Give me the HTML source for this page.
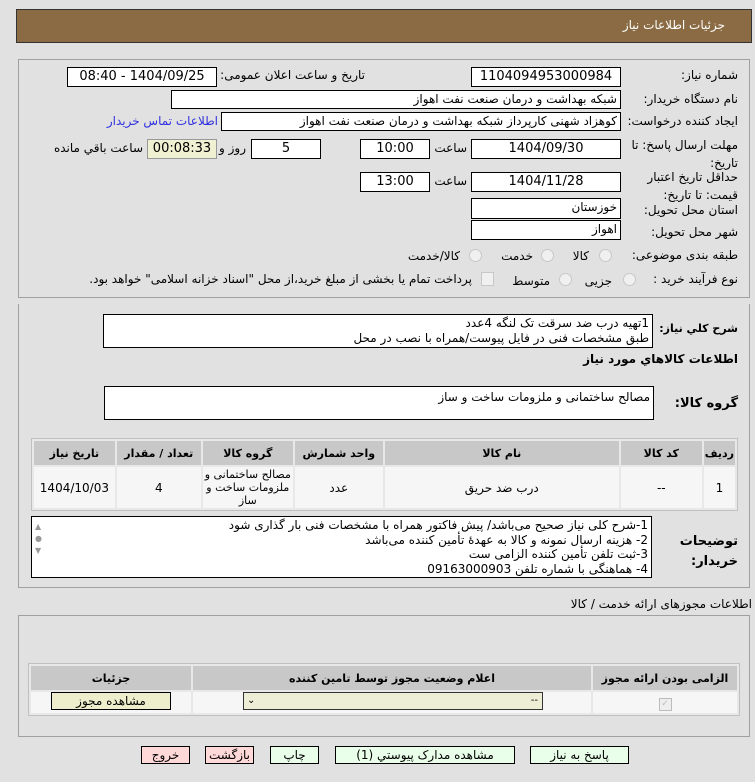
<!DOCTYPE html>
<html><head><meta charset="utf-8"><style>
body{margin:0;width:755px;height:782px;background:#e1e1e1;font-family:"DejaVu Sans","Liberation Sans",sans-serif;font-size:12px;color:#000;position:relative;overflow:hidden}
.a{position:absolute}
.box{position:absolute;background:#fff;border:1px solid #000;box-sizing:border-box;direction:rtl;padding:0 3px;line-height:17px;white-space:nowrap;overflow:hidden}
.c{text-align:center}
.l{position:absolute;direction:rtl;white-space:nowrap;text-align:right;font-size:12px}
.panel{position:absolute;border:1px solid #a0a0a0;box-sizing:border-box}
table{border-collapse:separate;border-spacing:2px;position:absolute;background:#e8e8e8;border:1px solid #c0c0c0}
th{background:#c8c8c8;font-weight:bold;font-size:11px;height:22px}
td{background:#f6f6f6;text-align:center}
.btn{position:absolute;border:1px solid #000;box-sizing:border-box;text-align:center;line-height:16px;background:#eaffea}
.pk{background:#ffd8d8}
.rad{position:absolute;width:11px;height:11px;border-radius:50%;border:1px solid #c8c8c8;background:#f0f0f0}
</style></head><body>
<div class="a" style="left:16px;top:9px;width:736px;height:34px;background:#8b6b43;border:1px solid #333;box-sizing:border-box"></div>
<div class="l" style="right:30px;top:18px;color:#fff;font-size:12px">جزئيات اطلاعات نياز</div>

<div class="panel" style="left:18px;top:59px;width:732px;height:239px"></div>
<div class="panel" style="left:18px;top:304px;width:732px;height:284px;border-top:none"></div>

<div class="l" style="right:17px;top:68px">شماره نیاز:</div>
<div class="box c" style="left:471px;top:67px;width:150px;height:20px;font-size:13px">1104094953000984</div>
<div class="l" style="right:390px;top:68px">تاریخ و ساعت اعلان عمومی:</div>
<div class="box c" style="left:67px;top:67px;width:150px;height:20px;font-size:13px">1404/09/25 - 08:40</div>

<div class="l" style="right:17px;top:92px">نام دستگاه خریدار:</div>
<div class="box" style="left:171px;top:90px;width:450px;height:19px">شبکه بهداشت و درمان صنعت نفت اهواز</div>

<div class="l" style="right:17px;top:114px">ایجاد کننده درخواست:</div>
<div class="box" style="left:221px;top:112px;width:400px;height:19px">کوهزاد شهنی کارپرداز شبکه بهداشت و درمان صنعت نفت اهواز</div>
<div class="l" style="right:537px;top:114px;color:#3030e0">اطلاعات تماس خریدار</div>

<div class="l" style="right:17px;top:136px;line-height:18px">مهلت ارسال پاسخ: تا<br>تاریخ:</div>
<div class="box c" style="left:471px;top:139px;width:150px;height:20px;font-size:13px">1404/09/30</div>
<div class="l" style="right:288px;top:141px">ساعت</div>
<div class="box c" style="left:360px;top:139px;width:70px;height:20px;font-size:13px">10:00</div>
<div class="box c" style="left:251px;top:139px;width:70px;height:20px;font-size:13px">5</div>
<div class="l" style="right:509px;top:141px">روز و</div>
<div class="box c" style="left:147px;top:139px;width:70px;height:20px;font-size:13px;background:#f0f0d2;border-color:#999">00:08:33</div>
<div class="l" style="right:612px;top:141px">ساعت باقي مانده</div>

<div class="l" style="right:17px;top:168px;line-height:18px">حداقل تاریخ اعتبار<br>قیمت: تا تاریخ:</div>
<div class="box c" style="left:471px;top:172px;width:150px;height:20px;font-size:13px">1404/11/28</div>
<div class="l" style="right:288px;top:174px">ساعت</div>
<div class="box c" style="left:360px;top:172px;width:70px;height:20px;font-size:13px">13:00</div>

<div class="l" style="right:17px;top:203px">استان محل تحویل:</div>
<div class="box" style="left:471px;top:198px;width:150px;height:21px">خوزستان</div>
<div class="l" style="right:17px;top:225px">شهر محل تحویل:</div>
<div class="box" style="left:471px;top:220px;width:150px;height:20px">اهواز</div>

<div class="l" style="right:17px;top:248px">طبقه بندی موضوعی:</div>
<div class="rad" style="left:599px;top:249px"></div><div class="l" style="right:166px;top:249px">کالا</div>
<div class="rad" style="left:541px;top:249px"></div><div class="l" style="right:222px;top:249px">خدمت</div>
<div class="rad" style="left:469px;top:249px"></div><div class="l" style="right:295px;top:249px">کالا/خدمت</div>

<div class="l" style="right:17px;top:272px">نوع فرآیند خرید :</div>
<div class="rad" style="left:623px;top:273px"></div><div class="l" style="right:143px;top:274px">جزیی</div>
<div class="rad" style="left:559px;top:273px"></div><div class="l" style="right:205px;top:274px">متوسط</div>
<div class="a" style="left:481px;top:272px;width:11px;height:12px;border:1px solid #c8c8c8;background:#f0f0f0"></div>
<div class="l" style="right:283px;top:272px">پرداخت تمام یا بخشی از مبلغ خرید،از محل "اسناد خزانه اسلامی" خواهد بود.</div>

<div class="l" style="right:17px;top:322px;font-weight:bold;font-size:11px">شرح کلي نياز:</div>
<div class="box" style="left:103px;top:314px;width:550px;height:34px;line-height:15px;padding-top:1px">1تهیه درب ضد سرقت تک لنگه 4عدد<br>طبق مشخصات فنی در فایل پیوست/همراه با نصب در محل</div>
<div class="l" style="right:17px;top:352px;font-weight:bold">اطلاعات کالاهاي مورد نياز</div>
<div class="l" style="right:17px;top:396px;font-weight:bold;font-size:13px">گروه کالا:</div>
<div class="box" style="left:104px;top:386px;width:550px;height:34px;padding-top:2px">مصالح ساختمانی و ملزومات ساخت و ساز</div>

<table style="left:31px;top:438px;width:707px;direction:rtl">
<tr><th style="width:25px">ردیف</th><th style="width:79px">کد کالا</th><th style="width:232px">نام کالا</th><th style="width:86px">واحد شمارش</th><th style="width:88px">گروه کالا</th><th style="width:82px">تعداد / مقدار</th><th>تاریخ نیاز</th></tr>
<tr style="height:41px"><td>1</td><td>--</td><td>درب ضد حریق</td><td>عدد</td><td style="font-size:11px;line-height:13px">مصالح ساختمانی و ملزومات ساخت و ساز</td><td>4</td><td>1404/10/03</td></tr>
</table>

<div class="l" style="right:17px;top:532px;font-weight:bold;line-height:20px;font-size:13px">توضیحات<br>خریدار:</div>
<div class="box" style="left:31px;top:516px;width:621px;height:62px;line-height:14.5px;padding-top:1px">1-شرح کلی نیاز صحیح می‌باشد/ پیش فاکتور همراه با مشخصات فنی بار گذاری شود<br>2- هزینه ارسال نمونه و کالا به عهدۀ تأمین کننده می‌باشد<br>3-ثبت تلفن تأمین کننده الزامی ست<br>4- هماهنگی با شماره تلفن 09163000903</div>
<div class="a" style="left:35px;top:521px;color:#999;font-size:8px;line-height:12px">▲<br>●<br>▼</div>

<div class="l" style="right:3px;top:597px">اطلاعات مجوزهای ارائه خدمت / کالا</div>
<div class="panel" style="left:18px;top:615px;width:732px;height:122px"></div>
<table style="left:28px;top:663px;width:712px;direction:rtl">
<tr><th style="width:142px">الزامی بودن ارائه مجوز</th><th style="width:396px">اعلام وضعیت مجوز توسط تامین کننده</th><th>جزئیات</th></tr>
<tr style="height:21px"><td><span style="display:inline-block;width:11px;height:11px;border:1px solid #bbb;background:#eee;color:#bbb;font-size:9px;line-height:11px">✓</span></td><td></td><td></td></tr>
</table>
<div class="a" style="left:243px;top:692px;width:300px;height:18px;background:#eeeed6;border:1px solid #333;box-sizing:border-box;font-size:10px;line-height:16px"><span style="position:absolute;left:3px">⌄</span><span style="position:absolute;right:4px">--</span></div>
<div class="btn" style="left:51px;top:692px;width:120px;height:18px;background:#eeeecc">مشاهده مجوز</div>

<div class="btn" style="left:530px;top:746px;width:99px;height:18px">پاسخ به نیاز</div>
<div class="btn" style="left:335px;top:746px;width:180px;height:18px">مشاهده مدارک پیوستي (1)</div>
<div class="btn" style="left:270px;top:746px;width:49px;height:18px">چاپ</div>
<div class="btn pk" style="left:205px;top:746px;width:49px;height:18px">بازگشت</div>
<div class="btn pk" style="left:141px;top:746px;width:49px;height:18px">خروج</div>
</body></html>
